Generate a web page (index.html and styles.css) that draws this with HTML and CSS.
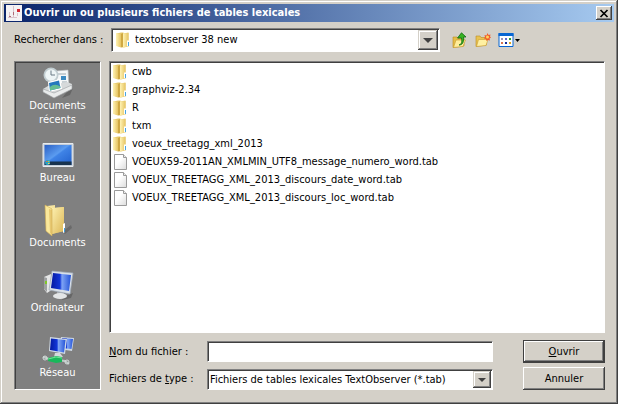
FILE: index.html
```html
<!DOCTYPE html>
<html lang="fr">
<head>
<meta charset="utf-8">
<title>Ouvrir un ou plusieurs fichiers de tables lexicales</title>
<link rel="stylesheet" href="styles.css">
</head>
<body>
<svg class="defs" aria-hidden="true">
  <defs>
    <linearGradient id="gold" x1="0" x2="1" y1="0" y2="0"><stop offset="0" stop-color="#fff3b4"/><stop offset="1" stop-color="#e6c463"/></linearGradient>
    <linearGradient id="gold2" x1="0" x2="1" y1="0" y2="1"><stop offset="0" stop-color="#fdf0b0"/><stop offset="1" stop-color="#dcb756"/></linearGradient>
    <linearGradient id="screen" x1="0" x2="1" y1="0" y2="1"><stop offset="0" stop-color="#2a5fc4"/><stop offset=".45" stop-color="#5b9cf0"/><stop offset=".5" stop-color="#3f83e6"/><stop offset="1" stop-color="#2160cc"/></linearGradient>
    <linearGradient id="glass" x1="0" x2="1" y1="0" y2="0"><stop offset="0" stop-color="#0418a0"/><stop offset=".45" stop-color="#1236d8"/><stop offset=".55" stop-color="#7fa4f4"/><stop offset="1" stop-color="#2453d8"/></linearGradient>
    <linearGradient id="sheet" x1="0" x2="1" y1="0" y2="1"><stop offset=".4" stop-color="#fff"/><stop offset="1" stop-color="#dcdcdc"/></linearGradient>
    <symbol id="folder" viewBox="0 0 16 16">
      <path d="M.5 1.500 5 .5h2.500v1l5-1v14l-5 1-5-1z" fill="#e6c868"/>
      <path d="M0 1 5 2v13.500L0 14z" fill="url(#gold)"/>
      <path d="M5 2 7 1v14l-2 .5z" fill="#cfa842"/>
      <path d="M7 1.500 12.500 1v13.500L7 15.500z" fill="url(#gold)"/>
      <path d="M11 8.500h2v5.500l-2 .5z" fill="#fff"/><path d="M12 10h1v4h-1z" fill="#49a4e0"/>
    </symbol>
    <symbol id="file" viewBox="0 0 16 16">
      <path d="M1.500.5h9l3 3v12h-12z" fill="url(#sheet)" stroke="#9a9a9a"/>
      <path d="M10.500.5v3h3" fill="#eee" stroke="#9a9a9a"/>
    </symbol>
  </defs>
</svg>
<main class="dialog">
  <header class="titlebar">
    <svg class="icon" viewBox="0 0 16 16" aria-hidden="true"><path fill="#f4f2f4" d="M0 0h16v16H0z"/><path d="M7.500 1v12M3.500 7v4M11.500 8v3M2 12.500h9" fill="none" stroke="#d9c3cb"/><path fill="#d52732" d="M11 4h3v3h-3z"/><path fill="#b06a78" d="M7 7h1v3H7zM3 11h2v1H3z"/></svg>
    <h1>Ouvrir un ou plusieurs fichiers de tables lexicales</h1>
    <button class="close" type="button" aria-label="Fermer"><svg viewBox="0 0 10 9" aria-hidden="true"><path d="M1.500 1 8.500 8M8.500 1 1.500 8" stroke="#000" stroke-width="1.700"/></svg></button>
  </header>
  <form class="content">
    <div class="lookup">
      <label for="folder-select">Rechercher dans :</label>
      <div class="combo large">
        <svg class="icon combo-icon" aria-hidden="true"><use href="#folder"/></svg>
        <select id="folder-select"><option>textobserver 38 new</option></select>
        <span class="arrow" aria-hidden="true"></span>
      </div>
      <div class="tools">
        <button type="button" aria-label="Dossier parent"><svg class="icon" viewBox="0 0 16 16"><path d="M1 5h4l1 1.500h6V14l-10 1.500H1z" fill="#e5bd47" stroke="#b88a20" stroke-width=".6"/><path d="M4 8h9.500L11 14.500 1.500 15.500z" fill="#ffed9b" stroke="#c79a31" stroke-width=".6"/><path d="M7 13c3-1 3-3 2.500-7H5.500L9.500.8 14 5h-2.500c.5 4.500-.5 8-4.500 8z" fill="#37b322" stroke="#136b12" stroke-width=".8"/></svg></button>
        <button type="button" aria-label="Nouveau dossier"><svg class="icon" viewBox="0 0 16 16"><path d="M1 4h4l1 1.500h5.500V13l-10 1.500H1z" fill="#e9c351" stroke="#b98b25" stroke-width=".6"/><path d="M3.500 7.500H13l-2 6-9.500 1z" fill="#fff0a2" stroke="#c79a31" stroke-width=".6"/><path d="m12.500 1 1 2 2-.5-.5 2 1 1-1.500 1 .5 2-2-.5-1.500 1-.5-2-2-.5 1-1.500-.5-2 2 .5z" fill="#f15c2b"/><circle cx="12.500" cy="5" r="1.500" fill="#ffd45d"/></svg></button>
        <button type="button" class="view" aria-label="Affichage"><svg class="icon" viewBox="0 0 16 16"><path d="M1 1.500h14v13H1z" fill="#fff" stroke="#0866d2"/><path d="M.5 1h15v3H.5z" fill="#0866d2"/><path fill="#9a92b5" d="M3 6h2v2H3z"/><path fill="#5d6cd0" d="M7 6h2v2H7z"/><path fill="#2b9a3b" d="M11 6h2v2h-2z"/><path fill="#d97450" d="M3 10h2v2H3z"/><path fill="#112c9b" d="M7 10h2v2H7z"/><path fill="#dba420" d="M11 10h2v2h-2z"/></svg><svg class="caret" viewBox="0 0 5 3"><path d="M0 0h5L2.500 3z"/></svg></button>
      </div>
    </div>
    <div class="columns">
      <nav class="places" aria-label="Emplacements">
        <a href="#recents"><svg viewBox="0 0 32 32" aria-hidden="true"><path d="M24 26l7-5-3 7-8 3z" fill="#666"/><path d="M14 4l12-1 1 18-12 2z" fill="#f5f7f8" stroke="#b8bec1" stroke-width=".6"/><path d="M16 7h8M20 15h5M20 17h5" stroke="#9ba9b1"/><path d="M19 9h5v4h-5z" fill="#3d8bc2"/><circle cx="9" cy="8" r="7.500" fill="#c0ccd0"/><circle cx="9" cy="8" r="5.800" fill="#eef5f6"/><path d="M9 3.500V8h4" fill="none" stroke="#6a7b86"/><path d="M1 22l5-3 19-4 5 2v3l-18 10z" fill="#d6d9da"/><path d="M6 15l12-3 2 10-13 3z" fill="#fff"/><path d="M7 16l10-2.500 1.500 7.500L8 23.500z" fill="#2478be"/><path d="M7.800 20q5-4 10.500-.5v1.500L8 23.500z" fill="#65bd92"/><path d="M1 22l11 4 18-8v4L12 31 1 25z" fill="#e9ebeb" stroke="#9ca0a2" stroke-width=".6"/></svg>Documents récents</a>
        <a href="#bureau"><svg viewBox="0 0 32 32" aria-hidden="true"><path d="M1 4.500h30v23H1z" fill="#c4cdd8" stroke="#e7ebef"/><path d="M2.500 6h27v20h-27z" fill="url(#screen)"/><path d="M2.500 22.500h27V26h-27z" fill="#18334e"/><circle cx="5.500" cy="23.500" r="2.500" fill="#27a2c5"/><path d="M4 23h1.500v-1H4z" fill="#ef6b30"/><path d="M6 23h1.500v-1H6z" fill="#a0d74a"/><path d="M6 25h1.500v-1H6z" fill="#ffd64a"/></svg>Bureau</a>
        <a href="#documents"><svg viewBox="0 0 32 32" aria-hidden="true"><path d="M20 28l9-7 1 3-7 6z" fill="#6a6a6a"/><path d="M5 2l8-1v3l9-1v24l-12 3z" fill="url(#gold2)"/><path d="M10 4l12-1v24l-12 3z" fill="url(#gold2)"/><path d="M3 1l7 4v27l-6-5z" fill="#fae89b" stroke="#d2ad50" stroke-width=".6"/><path d="M7 5l3 1v25l-2-2z" fill="#d4a747" opacity=".5"/><path d="M21 20l2-1v9l-2 1z" fill="#fff"/><path d="M22 24h1v4h-1z" fill="#3f9dd8"/></svg>Documents</a>
        <a href="#ordinateur"><svg viewBox="0 0 32 32" aria-hidden="true"><path d="M21 28l10-4-2 5-9 2z" fill="#666"/><path d="M2 8l7-3 2 15-6 4-3-4z" fill="#e5e6e6"/><path d="M2 8l3 1v14l-3-3z" fill="#9da0a1"/><path d="M3 12h2v3H3z" fill="#7fc727"/><path d="M15 22h7v5h-7z" fill="#aaaeb2"/><ellipse cx="18" cy="27" rx="7" ry="3" fill="#e3e5e6"/><path d="M10 2l21 2-3 21-21-4z" fill="#d9e0e8" stroke="#9ca8b6" stroke-width=".7"/><path d="M11 4l18 2-2 16-18-3z" fill="url(#glass)"/></svg>Ordinateur</a>
        <a href="#reseau"><svg viewBox="0 0 32 32" aria-hidden="true"><path d="M19 3l13 1-2 13-13-2z" fill="#cdd7e3"/><path d="M20 4l11 1-1.500 10L19 14z" fill="url(#glass)"/><path d="M8 3l17 2-2 15-16-3z" fill="#cfd9e4"/><path d="M9 4.500 23.500 6 22 18.500 8 16z" fill="url(#glass)"/><path d="M13 19h5l3 4h-9z" fill="#d4d9dc"/><path d="M1 23l6 2 16 2 4 3" fill="none" stroke="#bec9c7" stroke-width="2"/><path d="M6 24l8-2 6 1v5l-6 1-8-2z" fill="#18b85a"/><path d="M6 25l8-2 6 1" fill="none" stroke="#71e493"/><circle cx="3" cy="24" r="2" fill="none" stroke="#d4dcda"/><circle cx="25" cy="28" r="2" fill="none" stroke="#d4dcda"/></svg>Réseau</a>
      </nav>
      <div class="browser">
        <ul class="files">
          <li><svg class="icon" aria-hidden="true"><use href="#folder"/></svg>cwb</li>
          <li><svg class="icon" aria-hidden="true"><use href="#folder"/></svg>graphviz-2.34</li>
          <li><svg class="icon" aria-hidden="true"><use href="#folder"/></svg>R</li>
          <li><svg class="icon" aria-hidden="true"><use href="#folder"/></svg>txm</li>
          <li><svg class="icon" aria-hidden="true"><use href="#folder"/></svg>voeux_treetagg_xml_2013</li>
          <li><svg class="icon" aria-hidden="true"><use href="#file"/></svg>VOEUX59-2011AN_XMLMIN_UTF8_message_numero_word.tab</li>
          <li><svg class="icon" aria-hidden="true"><use href="#file"/></svg>VOEUX_TREETAGG_XML_2013_discours_date_word.tab</li>
          <li><svg class="icon" aria-hidden="true"><use href="#file"/></svg>VOEUX_TREETAGG_XML_2013_discours_loc_word.tab</li>
        </ul>
        <div class="fields">
          <label for="filename"><u>N</u>om du fichier :</label>
          <input id="filename" type="text">
          <button class="push default" type="submit"><u>O</u>uvrir</button>
          <label for="filetype">Fichiers de <u>t</u>ype :</label>
          <div class="combo">
            <select id="filetype"><option>Fichiers de tables lexicales TextObserver (*.tab)</option></select>
            <span class="arrow" aria-hidden="true"></span>
          </div>
          <button class="push" type="button">Annuler</button>
        </div>
      </div>
    </div>
  </form>
</main>
</body>
</html>
```
FILE: styles.css
```css
:root {
  --face: #d4d0c8;
  --shadow: #808080;
  --dark: #404040;
}

* { box-sizing: border-box; }

body {
  margin: 0;
  background: var(--face);
  color: #000;
  font: 11px/14px "DejaVu Sans Condensed", "DejaVu Sans", sans-serif;
}

.defs { position: absolute; width: 0; height: 0; }
svg { display: block; flex: none; }
.icon { width: 16px; height: 16px; }
button, input, select { font: inherit; color: inherit; border-radius: 0; margin: 0; }
button { padding: 0; border: 0; background: none; }

.dialog {
  display: flex;
  flex-direction: column;
  min-height: 100vh;
  padding: 4px;
  box-shadow: inset -1px -1px var(--dark), inset 1px 1px var(--face), inset -2px -2px var(--shadow), inset 2px 2px #fff;
}

.titlebar {
  display: flex;
  align-items: center;
  gap: 2px;
  height: 18px;
  padding: 0 2px;
  background: linear-gradient(90deg, #0a246a, #a6caf0);
}

.titlebar h1 { flex: 1; margin: 0; color: #fff; font-size: 11px; line-height: 14px; }

.close {
  display: grid;
  place-items: center;
  width: 16px;
  height: 14px;
  background: var(--face);
  box-shadow: inset -1px -1px var(--dark), inset 1px 1px #fff, inset -2px -2px var(--shadow);
}
.close svg { width: 10px; height: 9px; }

.content {
  flex: 1;
  display: flex;
  flex-direction: column;
  gap: 9px;
  padding: 6px 9px 10px 10px;
}

.lookup { display: grid; grid-template-columns: 97px 1fr 165px; align-items: center; }

.combo {
  position: relative;
  display: flex;
  height: 21px;
  background: #fff;
}

.combo, .files, .fields input {
  border: 1px solid;
  border-color: var(--shadow) #fff #fff var(--shadow);
  box-shadow: inset 1px 1px var(--dark);
}
.combo.large { height: 24px; }

.combo select {
  flex: 1;
  min-width: 0;
  appearance: none;
  border: 0;
  padding: 0 20px 0 2px;
  background: transparent;
}
.combo.large select { padding-left: 23px; }
.combo-icon { position: absolute; left: 4px; top: 3px; }

.arrow {
  position: absolute;
  top: 1px;
  right: 1px;
  bottom: 1px;
  display: grid;
  place-items: center;
  width: 18px;
  background: var(--face);
  box-shadow: inset -1px -1px var(--dark), inset 1px 1px var(--face), inset -2px -2px var(--shadow), inset 2px 2px #fff;
  pointer-events: none;
}
.arrow::before { content: ""; border: 4px solid transparent; border-top-color: var(--dark); border-bottom: 0; }
.large .arrow { width: 20px; }
.large .arrow::before { border-width: 5px 5px 0; }

.tools { display: flex; gap: 7px; padding-left: 12px; }
.view { display: flex; align-items: center; gap: 1px; }
.caret { width: 5px; height: 3px; }

.columns { flex: 1; display: grid; grid-template-columns: 87px 1fr; gap: 8px; }

.places {
  padding: 5px 2px 0;
  background: var(--shadow);
  border: 1px solid;
  border-color: var(--shadow) #fff #fff var(--shadow);
  box-shadow: inset 1px 1px var(--dark);
}
.places a {
  display: flex;
  flex-direction: column;
  align-items: center;
  min-height: 65px;
  padding: 0 8px 12px;
  color: #fff;
  text-align: center;
  text-decoration: none;
}
.places a:last-child { min-height: 0; padding-bottom: 0; }
.places svg { width: 32px; height: 32px; }

.browser { display: flex; flex-direction: column; gap: 7px; min-width: 0; }

.files { flex: 1; margin: 0; padding: 1px 3px; list-style: none; background: #fff; }
.files li { display: flex; align-items: center; gap: 3px; height: 18px; }

.fields {
  display: grid;
  grid-template-columns: 98px 1fr 112px;
  row-gap: 4px;
  align-items: center;
}
.fields input { min-width: 0; height: 21px; padding: 0 3px; background: #fff; outline: 0; }
.fields .combo { align-self: end; }

.push {
  height: 23px;
  margin-left: 30px;
  background: var(--face);
  box-shadow: inset -1px -1px var(--dark), inset 1px 1px #fff, inset -2px -2px var(--shadow);
}
.default { border: 1px solid var(--dark); }
```
